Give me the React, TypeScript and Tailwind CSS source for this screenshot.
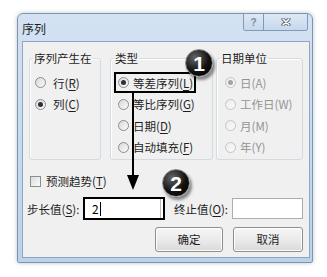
import React from "react";

type Item = { pre: string; k: string; post: string; checked?: boolean; disabled?: boolean };

const Radio = ({ checked, disabled }: { checked?: boolean; disabled?: boolean }) => (
  <span
    className={
      "flex h-[11px] w-[11px] shrink-0 items-center justify-center rounded-full border bg-linear-to-br " +
      (disabled ? "border-[#c4c4c4] from-[#ececec] to-[#fafafa]" : "border-[#8a8d91] from-[#d8d8d8] to-[#fbfbfb]")
    }
  >
    {checked && (
      <span className={"h-[5px] w-[5px] rounded-full " + (disabled ? "bg-[#a3a3a3]" : "bg-[#2b3138]")} />
    )}
  </span>
);

const Option = ({ item, pl, gap }: { item: Item; pl: string; gap: string }) => (
  <div className={"flex h-[21.5px] items-center " + pl + " " + gap}>
    <Radio checked={item.checked} disabled={item.disabled} />
    <span className={"text-[11.5px] leading-[16px] whitespace-nowrap " + (item.disabled ? "text-[#939393]" : "text-[#1e1e1e]")}>
      {item.pre}
      {item.disabled ? item.k : <u className="underline-offset-2">{item.k}</u>}
      {item.post}
    </span>
  </div>
);

const rows: Item[] = [
  { pre: "行(", k: "R", post: ")" },
  { pre: "列(", k: "C", post: ")", checked: true },
];

const types: Item[] = [
  { pre: "等差序列(", k: "L", post: ")", checked: true },
  { pre: "等比序列(", k: "G", post: ")" },
  { pre: "日期(", k: "D", post: ")" },
  { pre: "自动填充(", k: "F", post: ")" },
];

const units: Item[] = [
  { pre: "日(", k: "A", post: ")", checked: true, disabled: true },
  { pre: "工作日(", k: "W", post: ")", disabled: true },
  { pre: "月(", k: "M", post: ")", disabled: true },
  { pre: "年(", k: "Y", post: ")", disabled: true },
];

const Badge = ({ n, className }: { n: string; className: string }) => (
  <div
    className={
      "absolute flex h-[28px] w-[28px] items-center justify-center rounded-full border border-[#8a8a8a] bg-[radial-gradient(circle_at_35%_30%,#666,#111_55%,#000)] shadow-[2px_3px_3px_rgba(0,0,0,0.45)] " +
      className
    }
  >
    <span className="font-['Liberation_Sans',sans-serif] text-[21px] leading-none font-bold text-white">{n}</span>
  </div>
);

const Group = ({ title, w, ml, children }: { title: string; w: string; ml?: string; children: React.ReactNode }) => (
  <fieldset className={"h-[110px] rounded-[3px] border border-[#d3dbe2] shadow-[inset_1px_1px_0_#fff] " + w + " " + (ml ?? "")}>
    <legend className="ml-[3px] px-[1px] text-[11.5px] leading-[16px] text-[#1e1e1e]">{title}</legend>
    <div className="mt-[6px] flex flex-col">{children}</div>
  </fieldset>
);

const Button = ({ label, w }: { label: string; w: string }) => (
  <div
    className={
      "flex h-[25px] items-center justify-center rounded-[3px] border border-[#8e8f8f] bg-linear-to-b from-[#f6f6f6] via-[#ebebeb] to-[#d9d9d9] text-[11.5px] text-[#1e1e1e] shadow-[inset_0_0_0_1px_#fcfcfc] " +
      w
    }
  >
    {label}
  </div>
);

export default function App() {
  return (
    <div className="h-[277px] w-[327px] bg-white pt-[13px] pl-[17px] font-['Noto_Sans_CJK_SC','Noto_Sans',sans-serif]">
      <div className="flex h-[250px] w-[296px] flex-col rounded-t-[6px] rounded-b-[2px] border border-[#7a96b6] bg-linear-to-b from-[#d3e2f3] to-[#bcd2ea] shadow-[0_0_4px_rgba(0,0,0,0.25)]">
        {/* title bar */}
        <div className="flex h-[27px] items-start justify-between">
          <span className="pt-[7px] pl-[4px] text-[12px] leading-[16px] text-[#1e1e1e]">序列</span>
          <div className="mr-[4px] flex h-[17px] overflow-hidden rounded-b-[3px] border border-t-0 border-[#8099b7]">
            <div className="flex w-[20px] items-center justify-center border-r border-[#8099b7] bg-linear-to-b from-[#dde8f5] to-[#c6d8ec] font-['Liberation_Sans',sans-serif] text-[10px] font-bold text-[#7e8a98]">
              ?
            </div>
            <div className="flex w-[43px] items-center justify-center bg-linear-to-b from-[#dde8f5] to-[#c6d8ec]">
              <svg width="10" height="8" viewBox="0 0 10 8">
                <path d="M2 1 L8 7 M8 1 L2 7" stroke="#5d6876" strokeWidth="3.2" strokeLinecap="round" />
                <path d="M2 1 L8 7 M8 1 L2 7" stroke="#ffffff" strokeWidth="1.5" strokeLinecap="round" />
              </svg>
            </div>
          </div>
        </div>

        {/* client area */}
        <div className="relative mr-[2px] ml-[4px] flex h-[217px] flex-col border border-[#8ea6c2] bg-[#f0f0f0] pt-[8px]">
          <div className="flex pl-[6px]">
            <Group title="序列产生在" w="w-[72px]">
              {rows.map((r) => (
                <Option key={r.pre} item={r} pl="pl-[5px]" gap="gap-[7px]" />
              ))}
            </Group>
            <Group title="类型" w="w-[103px]" ml="ml-[9px]">
              {types.map((r) => (
                <Option key={r.pre} item={r} pl="pl-[7px]" gap="gap-[4px]" />
              ))}
            </Group>
            <Group title="日期单位" w="w-[87px]" ml="ml-[3px]">
              {units.map((r) => (
                <Option key={r.pre} item={r} pl="pl-[8px]" gap="gap-[4px]" />
              ))}
            </Group>
          </div>

          <div className="mt-[13px] flex h-[16px] items-center gap-[5px] pl-[7px]">
            <span className="h-[11px] w-[11px] border border-[#8a8d91] bg-linear-to-br from-[#dcdcdc] to-[#fbfbfb]" />
            <span className="text-[11.5px] leading-[16px] text-[#1e1e1e]">
              预测趋势(<u className="underline-offset-2">T</u>)
            </span>
          </div>

          <div className="mt-[8px] flex h-[23px] items-center pl-[4px]">
            <span className="w-[56px] text-[11.5px] leading-[16px] text-[#1e1e1e]">
              步长值(<u className="underline-offset-2">S</u>):
            </span>
            <div className="flex h-[23px] w-[82px] border-2 border-black bg-white">
              <div className="mr-[2px] flex flex-1 items-center border-r border-[#b8b8b8] pl-[7px]">
                <span className="text-[12px] leading-[16px] text-black">2</span>
                <span className="ml-[1px] h-[14px] w-[1px] bg-black" />
              </div>
            </div>
            <span className="ml-[9px] w-[58px] text-[11.5px] leading-[16px] text-[#1e1e1e]">
              终止值(<u className="underline-offset-2">O</u>):
            </span>
            <div className="h-[21px] w-[71px] border border-[#abadb3] bg-white" />
          </div>

          <div className="mt-[7px] flex justify-end gap-[10px] pr-[6px]">
            <Button label="确定" w="w-[68px]" />
            <Button label="取消" w="w-[70px]" />
          </div>

          {/* annotations */}
          <div className="absolute top-[30px] left-[91px] h-[21px] w-[82px] border-2 border-black" />
          <svg className="absolute top-[50px] left-[104px]" width="12" height="98" viewBox="0 0 12 98">
            <path d="M6 0 V84" stroke="#000" strokeWidth="2" />
            <path d="M0 83 L12 83 L6 98 Z" fill="#000" />
          </svg>
          <Badge n="1" className="top-[7px] left-[162px]" />
          <Badge n="2" className="top-[127px] left-[139px]" />
        </div>
      </div>
    </div>
  );
}
